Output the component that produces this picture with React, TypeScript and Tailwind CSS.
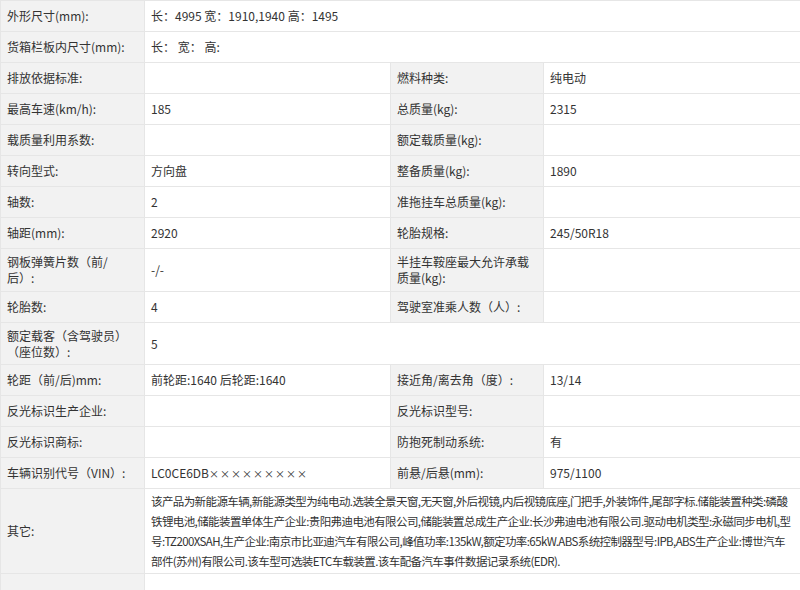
import type { ReactNode } from "react";

type Row = { a: ReactNode; b: ReactNode; c?: ReactNode; d?: ReactNode; full?: boolean; h?: number };

const X = <span className="text-[10px] tracking-[1px]">×××××××××</span>;

const rows: Row[] = [
  { a: "外形尺寸(mm):", b: "长：4995 宽：1910,1940 高：1495", full: true },
  { a: "货箱栏板内尺寸(mm):", b: "长： 宽： 高:", full: true },
  { a: "排放依据标准:", b: "", c: "燃料种类:", d: "纯电动" },
  { a: "最高车速(km/h):", b: "185", c: "总质量(kg):", d: "2315" },
  { a: "载质量利用系数:", b: "", c: "额定载质量(kg):", d: "" },
  { a: "转向型式:", b: "方向盘", c: "整备质量(kg):", d: "1890" },
  { a: "轴数:", b: "2", c: "准拖挂车总质量(kg):", d: "" },
  { a: "轴距(mm):", b: "2920", c: "轮胎规格:", d: "245/50R18" },
  { a: <>钢板弹簧片数（前/<br />后）:</>, b: "-/-", c: <>半挂车鞍座最大允许承载<br />质量(kg):</>, d: "", h: 43 },
  { a: "轮胎数:", b: "4", c: "驾驶室准乘人数（人）:", d: "" },
  { a: <>额定载客（含驾驶员）<br />（座位数）:</>, b: "5", full: true, h: 42 },
  { a: "轮距（前/后)mm:", b: "前轮距:1640 后轮距:1640", c: "接近角/离去角（度）:", d: "13/14" },
  { a: "反光标识生产企业:", b: "", c: "反光标识型号:", d: "" },
  { a: "反光标识商标:", b: "", c: "防抱死制动系统:", d: "有" },
  { a: "车辆识别代号（VIN）:", b: <>LC0CE6DB{X}</>, c: "前悬/后悬(mm):", d: "975/1100" },
];

const other =
  "该产品为新能源车辆,新能源类型为纯电动.选装全景天窗,无天窗,外后视镜,内后视镜底座,门把手,外装饰件,尾部字标.储能装置种类:磷酸铁锂电池,储能装置单体生产企业:贵阳弗迪电池有限公司,储能装置总成生产企业:长沙弗迪电池有限公司.驱动电机类型:永磁同步电机,型号:TZ200XSAH,生产企业:南京市比亚迪汽车有限公司,峰值功率:135kW,额定功率:65kW.ABS系统控制器型号:IPB,ABS生产企业:博世汽车部件(苏州)有限公司.该车型可选装ETC车载装置.该车配备汽车事件数据记录系统(EDR).";

const lab = "bg-[#f2f2f2] border border-[#e6e6e6] px-[6px] align-middle";
const val = "bg-white border border-[#e6e6e6] px-[6px] align-middle";

export default function App() {
  return (
    <div
      className="w-[800px] h-[590px] overflow-hidden bg-white text-[12px] leading-[16px] text-[#333]"
      style={{ fontFamily: '"Microsoft YaHei","Noto Sans CJK SC",sans-serif' }}
    >
      <table className="w-[800px] border-collapse table-fixed">
        <colgroup>
          <col className="w-[144px]" />
          <col className="w-[246px]" />
          <col className="w-[153px]" />
          <col className="w-[257px]" />
        </colgroup>
        <tbody>
          {rows.map((r, i) => (
            <tr key={i} style={{ height: r.h ?? 31 }}>
              <td className={lab}>{r.a}</td>
              {r.full ? (
                <td className={val} colSpan={3}>{r.b}</td>
              ) : (
                <>
                  <td className={val}>{r.b}</td>
                  <td className={lab}>{r.c}</td>
                  <td className={val}>{r.d}</td>
                </>
              )}
            </tr>
          ))}
          <tr>
            <td className={lab}>其它:</td>
            <td
              className={val + " py-[2px] text-[11.5px] leading-[20px] tracking-[-0.6px]"}
              colSpan={3}
            >
              {other}
            </td>
          </tr>
          <tr className="h-[31px]">
            <td className={lab}></td>
            <td className={val} colSpan={3}></td>
          </tr>
        </tbody>
      </table>
    </div>
  );
}
